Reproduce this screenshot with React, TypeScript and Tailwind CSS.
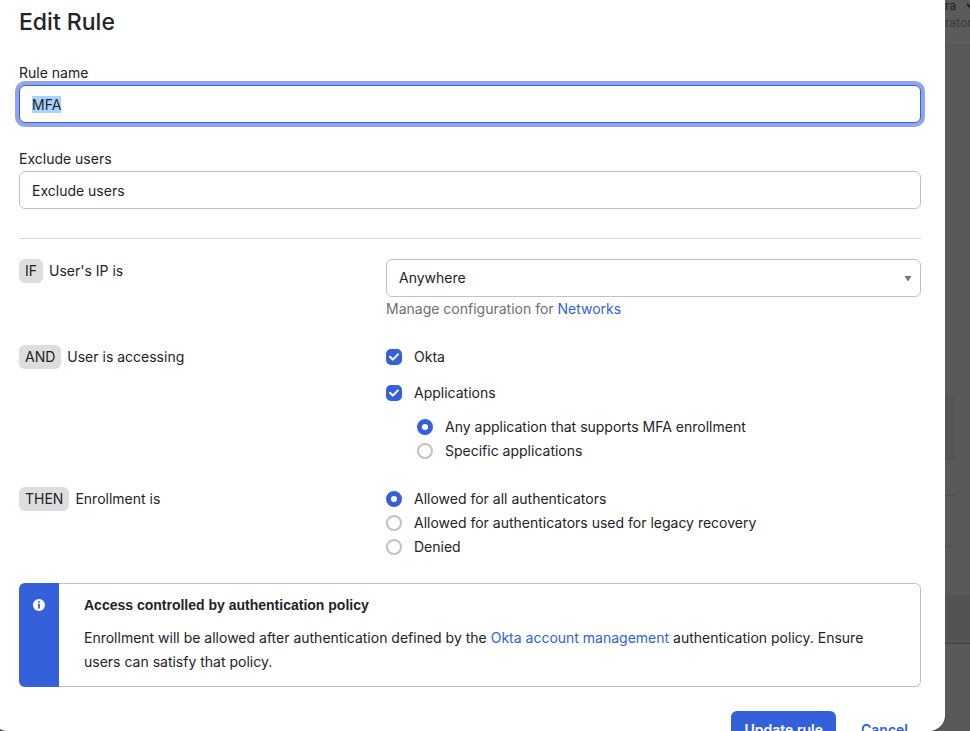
import { useEffect, useRef } from "react";
import type { ReactNode } from "react";

const FIELD =
  "block h-[38px] w-full rounded-[6px] border border-[#c1c1c1] bg-white px-3 text-[#232327]";

const LINK = "text-[#3461da]";

function Tag({ children }: { children: ReactNode }) {
  return (
    <span className="rounded-[6px] bg-[#dddddd] px-[6px] leading-6">{children}</span>
  );
}

function Condition({
  tag,
  text,
  labelFor,
  id,
}: {
  tag: string;
  text: string;
  labelFor?: string;
  id?: string;
}) {
  return (
    <div className="flex items-start gap-[6px]">
      <Tag>{tag}</Tag>
      {labelFor ? (
        <label htmlFor={labelFor}>{text}</label>
      ) : (
        <span id={id}>{text}</span>
      )}
    </div>
  );
}

function Checkbox({ label }: { label: string }) {
  return (
    <label className="flex items-center gap-3">
      <span className="relative size-4 shrink-0">
        <input
          type="checkbox"
          defaultChecked
          className="peer block size-4 appearance-none rounded-[5px] border-2 border-[#c1c1c1] bg-white checked:border-[#3461da] checked:bg-[#3461da]"
        />
        <svg
          viewBox="0 0 16 16"
          className="pointer-events-none absolute inset-0 hidden size-4 peer-checked:block"
          fill="none"
          stroke="#fff"
          strokeWidth="2"
          strokeLinecap="round"
          strokeLinejoin="round"
          aria-hidden
        >
          <path d="M4 7.8 6.8 10.6 12 5.4" />
        </svg>
      </span>
      {label}
    </label>
  );
}

function Radio({
  name,
  label,
  checked = false,
}: {
  name: string;
  label: string;
  checked?: boolean;
}) {
  return (
    <label className="flex items-center gap-3">
      <input
        type="radio"
        name={name}
        defaultChecked={checked}
        className="block size-4 shrink-0 appearance-none rounded-full border-2 border-[#c1c1c1] bg-white checked:border-[5px] checked:border-[#3461da]"
      />
      {label}
    </label>
  );
}

/** Sliver of the admin console that stays visible behind the dialog. */
function Backdrop() {
  return (
    <div className="w-[25px] shrink-0 overflow-hidden whitespace-nowrap" aria-hidden>
      <div className="h-[46px] border-b border-[#525252] bg-[#5b5b5b]">
        <div className="flex items-center gap-[10px] text-[12px] leading-3 text-[#222222]">
          ra
          <svg viewBox="0 0 10 6" className="h-[6px] w-[10px] shrink-0" fill="none" stroke="#222" strokeWidth="2">
            <path d="M1 1 5 5 9 1" />
          </svg>
        </div>
        <div className="pt-[2px] text-[12px] leading-[18px] text-[#3a3a3a]">rator</div>
      </div>
      <div className="h-[350px]" />
      <div className="mr-[15px] h-[63px] border-b border-[#4d4d4d] bg-[#555555]" />
      <div className="mr-[15px] h-[37px] border-b border-[#4d4d4d]" />
      <div className="mr-[15px] h-[51px] border-b border-[#4d4d4d]" />
      <div className="h-12" />
      <div className="h-[49px] border-b border-[#424242] bg-[#535353]" />
    </div>
  );
}

export default function App() {
  const ruleName = useRef<HTMLInputElement>(null);

  useEffect(() => {
    ruleName.current?.focus();
    ruleName.current?.select();
  }, []);

  return (
    <div className="flex h-screen overflow-hidden bg-[#595959] font-['Inter',sans-serif] text-[14px] leading-6 text-[#232327]">
      <main className="-ml-2 h-full min-w-0 flex-1 overflow-hidden rounded-b-2xl bg-white pr-6 pl-[27px]">
        <h1 className="pt-[6px] text-[23px] leading-8 font-medium">Edit Rule</h1>
        <form onSubmit={(e) => e.preventDefault()}>
          <label htmlFor="rule-name" className="mt-[23px] block">
            Rule name
          </label>
          <input
            id="rule-name"
            ref={ruleName}
            defaultValue="MFA"
            className={`${FIELD} outline-none selection:bg-[#a8d3fd] selection:text-[#232327] focus:border-[#3461da] focus:ring-4 focus:ring-[#8fa6ec]`}
          />
          <label htmlFor="exclude-users" className="mt-6 block">
            Exclude users
          </label>
          <input id="exclude-users" defaultValue="Exclude users" className={FIELD} />
          <hr className="mt-[29px] mb-5 border-[#d7d7dc]" />

          <div className="grid grid-cols-[367px_1fr] gap-y-6">
            <Condition tag="IF" text="User's IP is" labelFor="ip-zone" />
            <div>
              <div className="relative">
                <select id="ip-zone" className={`${FIELD} appearance-none`}>
                  <option>Anywhere</option>
                </select>
                <svg
                  viewBox="0 0 8 6"
                  className="pointer-events-none absolute top-[17px] right-[9px] h-[6px] w-2"
                  fill="#757575"
                  aria-hidden
                >
                  <path d="M.5 0h7L4 5.5z" />
                </svg>
              </div>
              <p className="text-[#6e6e78]">
                Manage configuration for{" "}
                <a href="#networks" className={LINK}>
                  Networks
                </a>
              </p>
            </div>

            <Condition tag="AND" text="User is accessing" id="accessing" />
            <div role="group" aria-labelledby="accessing">
              <Checkbox label="Okta" />
              <div className="mt-3">
                <Checkbox label="Applications" />
              </div>
              <div className="mt-[10px] ml-[31px]">
                <Radio name="apps" label="Any application that supports MFA enrollment" checked />
                <Radio name="apps" label="Specific applications" />
              </div>
            </div>

            <Condition tag="THEN" text="Enrollment is" id="enrollment" />
            <div role="radiogroup" aria-labelledby="enrollment">
              <Radio name="enrollment" label="Allowed for all authenticators" checked />
              <Radio name="enrollment" label="Allowed for authenticators used for legacy recovery" />
              <Radio name="enrollment" label="Denied" />
            </div>
          </div>

          <section className="mt-6 flex">
            <div className="flex w-10 shrink-0 justify-center rounded-l-[6px] bg-[#3461da] pt-4">
              <svg viewBox="0 0 12 12" className="size-3" aria-hidden>
                <circle cx="6" cy="6" r="6" fill="#fff" />
                <path d="M5.1 2.2h1.8v1.5H5.1zM4.6 4.8h2.3v4.6H5.1V5.9h-.5z" fill="#3461da" />
              </svg>
            </div>
            <div className="min-w-0 flex-1 rounded-r-[6px] border border-l-0 border-[#c1c1c1] py-3 pr-8 pl-[25px]">
              <h2 className="font-['Liberation_Sans',sans-serif] leading-[18px] font-bold">
                Access controlled by authentication policy
              </h2>
              <p className="mt-3">
                Enrollment will be allowed after authentication defined by the{" "}
                <a href="#account-management" className={LINK}>
                  Okta account management
                </a>{" "}
                authentication policy. Ensure users can satisfy that policy.
              </p>
            </div>
          </section>

          <div className="mt-6 flex justify-end gap-3">
            <button type="submit" className="h-[38px] rounded-[6px] bg-[#3461da] px-[13px] font-semibold text-white">
              Update rule
            </button>
            <button type="button" className="h-[38px] px-[13px] font-semibold text-[#3461da]">
              Cancel
            </button>
          </div>
        </form>
      </main>
      <Backdrop />
    </div>
  );
}
